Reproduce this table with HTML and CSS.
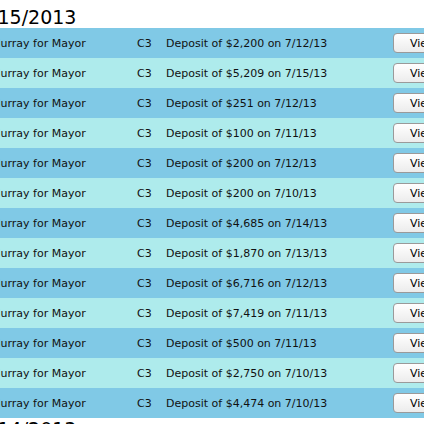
FILE: index.html
```html
<!DOCTYPE html>
<html>
<head>
<meta charset="utf-8">
<link rel="stylesheet" href="styles.css">
</head>
<body>
<div class="page">
  <h2 class="day">7/15/2013</h2>
  <div class="list">
    <div class="row dark"><span class="name">Murray for Mayor</span><span class="code">C3</span><span class="desc">Deposit of $2,200 on 7/12/13</span><button class="btn">View Details</button></div>
    <div class="row light"><span class="name">Murray for Mayor</span><span class="code">C3</span><span class="desc">Deposit of $5,209 on 7/15/13</span><button class="btn">View Details</button></div>
    <div class="row dark"><span class="name">Murray for Mayor</span><span class="code">C3</span><span class="desc">Deposit of $251 on 7/12/13</span><button class="btn">View Details</button></div>
    <div class="row light"><span class="name">Murray for Mayor</span><span class="code">C3</span><span class="desc">Deposit of $100 on 7/11/13</span><button class="btn">View Details</button></div>
    <div class="row dark"><span class="name">Murray for Mayor</span><span class="code">C3</span><span class="desc">Deposit of $200 on 7/12/13</span><button class="btn">View Details</button></div>
    <div class="row light"><span class="name">Murray for Mayor</span><span class="code">C3</span><span class="desc">Deposit of $200 on 7/10/13</span><button class="btn">View Details</button></div>
    <div class="row dark"><span class="name">Murray for Mayor</span><span class="code">C3</span><span class="desc">Deposit of $4,685 on 7/14/13</span><button class="btn">View Details</button></div>
    <div class="row light"><span class="name">Murray for Mayor</span><span class="code">C3</span><span class="desc">Deposit of $1,870 on 7/13/13</span><button class="btn">View Details</button></div>
    <div class="row dark"><span class="name">Murray for Mayor</span><span class="code">C3</span><span class="desc">Deposit of $6,716 on 7/12/13</span><button class="btn">View Details</button></div>
    <div class="row light"><span class="name">Murray for Mayor</span><span class="code">C3</span><span class="desc">Deposit of $7,419 on 7/11/13</span><button class="btn">View Details</button></div>
    <div class="row dark"><span class="name">Murray for Mayor</span><span class="code">C3</span><span class="desc">Deposit of $500 on 7/11/13</span><button class="btn">View Details</button></div>
    <div class="row light"><span class="name">Murray for Mayor</span><span class="code">C3</span><span class="desc">Deposit of $2,750 on 7/10/13</span><button class="btn">View Details</button></div>
    <div class="row dark"><span class="name">Murray for Mayor</span><span class="code">C3</span><span class="desc">Deposit of $4,474 on 7/10/13</span><button class="btn">View Details</button></div>
  </div>
  <h2 class="day next">7/14/2013</h2>
</div>
</body>
</html>
```
FILE: styles.css
```css
html, body {
  margin: 0;
  padding: 0;
  background: #ffffff;
  overflow: hidden;
}
body {
  padding-top: 6px;
  font-family: "DejaVu Sans", Verdana, sans-serif;
  color: #111111;
}
.page {
  margin-left: -21px;
  width: 560px;
}
.day {
  margin: 0;
  font-size: 19px;
  font-weight: normal;
  line-height: 20px;
  padding-top: 1px;
  padding-bottom: 1px;
  color: #000000;
}
.day.next {
  margin-top: 0;
}
.list {
  display: flex;
  flex-direction: column;
}
.row {
  display: grid;
  grid-template-columns: 146px 29px 227px auto;
  align-items: center;
  height: 30px;
  padding-left: 12px;
  font-size: 11px;
  white-space: nowrap;
}
.dark { background: #80c9e6; }
.light { background: #aeebec; }
.btn {
  justify-self: start;
  height: 20px;
  padding: 0 16px;
  border: 1px solid #9a9a9a;
  border-radius: 4px;
  background: linear-gradient(#ffffff, #ececec);
  font-family: "DejaVu Sans", Verdana, sans-serif;
  font-size: 11px;
  color: #000000;
  text-align: left;
}
```
